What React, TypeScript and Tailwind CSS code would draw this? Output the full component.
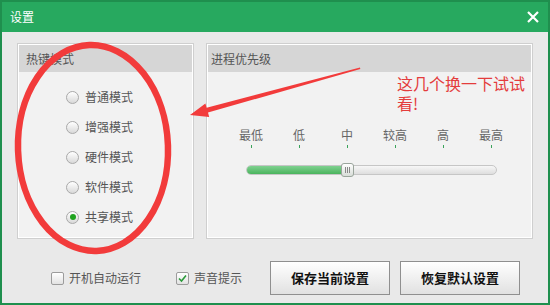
import React from "react";

const font = { fontFamily: '"Noto Sans CJK SC", "Noto Sans", sans-serif' };

const modes = ["普通模式", "增强模式", "硬件模式", "软件模式", "共享模式"];
const levels = ["最低", "低", "中", "较高", "高", "最高"];

const Radio: React.FC<{ checked?: boolean; label: string }> = ({ checked, label }) => (
  <div className="flex items-center h-[30px] gap-[6px]">
    <span className="w-[13px] h-[13px] rounded-full border border-[#a9a9a9] bg-gradient-to-b from-[#ffffff] to-[#d9d9d9] flex items-center justify-center">
      {checked && <span className="w-[6px] h-[6px] rounded-full bg-[#1fa31f]" />}
    </span>
    <span className="text-[12px] text-[#555555] leading-none">{label}</span>
  </div>
);

const Checkbox: React.FC<{ checked?: boolean; label: string }> = ({ checked, label }) => (
  <div className="flex items-center gap-[5px]">
    <span className="w-[13px] h-[13px] rounded-[2px] border border-[#9c9c9c] bg-gradient-to-b from-[#ffffff] to-[#e2e2e2] flex items-center justify-center">
      {checked && (
        <svg width="9" height="9" viewBox="0 0 9 9">
          <path d="M1 4.5 L3.5 7 L8 1.5" fill="none" stroke="#2a9a3a" strokeWidth="1.6" />
        </svg>
      )}
    </span>
    <span className="text-[12px] text-[#555555] leading-none">{label}</span>
  </div>
);

const Button: React.FC<{ label: string }> = ({ label }) => (
  <button
    type="button"
    className="w-[120px] h-[34px] border border-[#8f8f8f] bg-gradient-to-b from-[#ffffff] to-[#e1e1e1] text-[13px] font-bold text-[#111111]"
  >
    {label}
  </button>
);

export default function App() {
  return (
    <div className="relative w-[550px] h-[305px] border-2 border-[#1f8f4e] bg-[#e9e9e9] flex flex-col overflow-hidden" style={font}>
      {/* title bar */}
      <div className="h-[30px] bg-[#27a95f] flex items-center justify-between pl-[8px] pr-[9px] shrink-0">
        <span className="text-[12px] text-white">设置</span>
        <svg width="12" height="12" viewBox="0 0 12 12">
          <path d="M1 1 L11 11 M11 1 L1 11" stroke="white" strokeWidth="2.2" />
        </svg>
      </div>

      <div className="flex pl-[15px] pt-[11px] gap-[12px]">
        {/* hotkey mode */}
        <div className="w-[177px] h-[196px] border border-[#cfcfcf] bg-[#f2f2f2] shadow-[inset_0_0_0_1px_#ffffff] p-px">
          <div className="h-[27px] bg-[#d6d6d6] flex items-center pl-[7px] text-[12px] text-[#555555]">热键模式</div>
          <div className="flex flex-col pl-[47px] pt-[10px]">
            {modes.map((m, i) => (
              <Radio key={m} label={m} checked={i === 4} />
            ))}
          </div>
        </div>

        {/* process priority */}
        <div className="w-[327px] h-[196px] border border-[#cfcfcf] bg-[#f2f2f2] shadow-[inset_0_0_0_1px_#ffffff] p-px">
          <div className="h-[27px] bg-[#d6d6d6] flex items-center pl-[3px] text-[12px] text-[#555555]">进程优先级</div>
          <div className="flex ml-[19px] mt-[55px]">
            {levels.map((l) => (
              <div key={l} className="w-[48px] flex flex-col items-center">
                <span className="h-[16px] text-[12px] leading-[16px] text-[#666666]">{l}</span>
                <span className="mt-[2px] w-px h-[3px] bg-[#3aa35a]" />
              </div>
            ))}
          </div>
          <div className="relative ml-[38px] mt-[17px] w-[251px] h-[10px] rounded-full border border-[#c6c6c6] bg-gradient-to-b from-[#f7f7f7] to-[#dedede]">
            <div className="h-full w-[100px] rounded-full bg-gradient-to-b from-[#7fd190] to-[#49b45d]" />
            <div className="absolute left-[94px] top-[-3px] w-[13px] h-[14px] rounded-[3px] border border-[#9aa59c] bg-gradient-to-b from-[#ffffff] to-[#d8ddd8] flex items-center justify-center gap-[1px]">
              <span className="w-px h-[6px] bg-[#8a8a8a]" />
              <span className="w-px h-[6px] bg-[#8a8a8a]" />
              <span className="w-px h-[6px] bg-[#8a8a8a]" />
            </div>
          </div>
        </div>
      </div>

      {/* bottom row */}
      <div className="flex items-center h-[34px] mt-[22px]">
        <div className="ml-[49px]">
          <Checkbox label="开机自动运行" />
        </div>
        <div className="ml-[35px]">
          <Checkbox label="声音提示" checked />
        </div>
        <div className="ml-[28px]">
          <Button label="保存当前设置" />
        </div>
        <div className="ml-[10px]">
          <Button label="恢复默认设置" />
        </div>
      </div>

      {/* annotation overlay */}
      <svg className="absolute left-[-2px] top-[-2px] pointer-events-none" width="550" height="305" viewBox="0 0 550 305">
        <ellipse cx="93" cy="148" rx="75" ry="103" fill="none" stroke="#f23b3b" strokeWidth="6.5" transform="rotate(-2 93 148)" />
        <polygon points="190,115 205.4,103.5 206.6,107.8 360,67.5 360.3,69 208,112.6 209.2,117" fill="#f23b3b" />
      </svg>
      <div className="absolute left-[395px] top-[71px] w-[135px] text-[16px] leading-[20px] text-[#e43c3c]">
        这几个换一下试试看!
      </div>
    </div>
  );
}
